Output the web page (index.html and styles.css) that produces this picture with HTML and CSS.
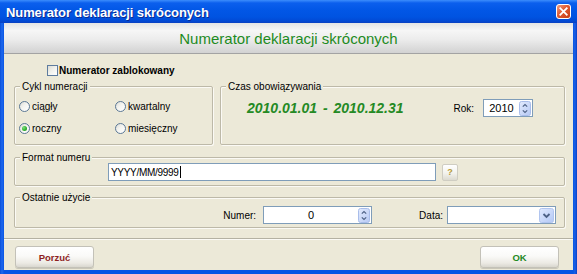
FILE: index.html
```html
<!DOCTYPE html>
<html lang="pl">
<head>
<meta charset="utf-8">
<title>Numerator deklaracji skróconych</title>
<link rel="stylesheet" href="styles.css">
</head>
<body>
<div class="window">
  <div class="titlebar">
    <span class="title">Numerator deklaracji skróconych</span>
    <span class="close">
      <svg width="15" height="15" viewBox="0 0 15 15">
        <defs>
          <linearGradient id="cg" x1="0" y1="0" x2="1" y2="1">
            <stop offset="0" stop-color="#f0a58a"/>
            <stop offset="0.45" stop-color="#e05a32"/>
            <stop offset="1" stop-color="#c23a12"/>
          </linearGradient>
        </defs>
        <rect x="0.5" y="0.5" width="14" height="14" rx="2.5" fill="url(#cg)" stroke="#ffffff"/>
        <path d="M4.3 4.3 L10.7 10.7 M10.7 4.3 L4.3 10.7" stroke="#ffffff" stroke-width="1.8" stroke-linecap="square"/>
      </svg>
    </span>
  </div>
  <div class="client">
    <div class="header">Numerator deklaracji skróconych</div>
    <div class="content">
      <div class="lock"><span class="checkbox"></span><span>Numerator zablokowany</span></div>
      <div class="row-groups">
        <div class="group cycle">
          <span class="legend">Cykl numeracji</span>
          <div class="radios">
            <span class="radio-item"><span class="radio"></span>ciągły</span>
            <span class="radio-item"><span class="radio"></span>kwartalny</span>
            <span class="radio-item"><span class="radio checked"></span>roczny</span>
            <span class="radio-item"><span class="radio"></span>miesięczny</span>
          </div>
        </div>
        <div class="group period">
          <span class="legend">Czas obowiązywania</span>
          <div class="period-row">
            <span class="dates">2010.01.01 - 2010.12.31</span>
            <span class="lbl rok">Rok:</span>
            <span class="field spin-year">
              <span class="val">2010</span>
              <svg class="spinbtn" width="12" height="15" viewBox="0 0 12 15">
                <defs>
                  <linearGradient id="sg1" x1="0" y1="0" x2="1" y2="1">
                    <stop offset="0" stop-color="#e3ebfd"/>
                    <stop offset="1" stop-color="#b6c9f4"/>
                  </linearGradient>
                </defs>
                <rect x="0.5" y="0.5" width="11" height="14" rx="2" fill="url(#sg1)" stroke="#a9bdea"/>
                <path d="M3.8 5.6 L6 3.6 L8.2 5.6 M3.8 9.4 L6 11.4 L8.2 9.4" fill="none" stroke="#4d6185" stroke-width="1.2"/>
              </svg>
            </span>
          </div>
        </div>
      </div>
      <div class="group format">
        <span class="legend">Format numeru</span>
        <div class="format-row">
          <span class="field text-input"><span class="txt">YYYY/MM/9999</span><span class="caret"></span></span>
          <span class="help">?</span>
        </div>
      </div>
      <div class="group last">
        <span class="legend">Ostatnie użycie</span>
        <div class="last-row">
          <span class="lbl">Numer:</span>
          <span class="field spin-num">
            <span class="val">0</span>
            <svg class="spinbtn" width="12" height="15" viewBox="0 0 12 15">
              <defs>
                <linearGradient id="sg2" x1="0" y1="0" x2="1" y2="1">
                  <stop offset="0" stop-color="#e3ebfd"/>
                  <stop offset="1" stop-color="#b6c9f4"/>
                </linearGradient>
              </defs>
              <rect x="0.5" y="0.5" width="11" height="14" rx="2" fill="url(#sg2)" stroke="#a9bdea"/>
              <path d="M3.8 5.6 L6 3.6 L8.2 5.6 M3.8 9.4 L6 11.4 L8.2 9.4" fill="none" stroke="#4d6185" stroke-width="1.2"/>
            </svg>
          </span>
          <span class="lbl data-lbl">Data:</span>
          <span class="field combo">
            <span class="val"></span>
            <svg class="combobtn" width="15" height="15" viewBox="0 0 15 15">
              <defs>
                <linearGradient id="cbg" x1="0" y1="0" x2="1" y2="1">
                  <stop offset="0" stop-color="#e1eafe"/>
                  <stop offset="1" stop-color="#b3c8f5"/>
                </linearGradient>
              </defs>
              <rect x="0.5" y="0.5" width="14" height="14" rx="2" fill="url(#cbg)" stroke="#b1c5ef"/>
              <path d="M4.5 6 L7.5 9 L10.5 6" fill="none" stroke="#4d6185" stroke-width="1.8"/>
            </svg>
          </span>
        </div>
      </div>
    </div>
    <div class="separator"></div>
    <div class="footer">
      <button class="btn cancel">Porzuć</button>
      <button class="btn ok">OK</button>
    </div>
  </div>
</div>
</body>
</html>
```

FILE: styles.css
```css
html, body {
  margin: 0;
  padding: 0;
}

body {
  width: 577px;
  height: 274px;
  overflow: hidden;
  font-family: "Liberation Sans", Arial, sans-serif;
  font-size: 10px;
  color: #000;
}

.window {
  width: 577px;
  height: 274px;
  display: flex;
  flex-direction: column;
  background: linear-gradient(90deg, #0a4fd8 0, #1d68ee 2px, #0855e4 4px, #0855e4 573px, #1a5fe6 575px, #0a3fc4 577px);
}

.titlebar {
  height: 23px;
  flex: none;
  display: flex;
  align-items: center;
  padding: 0 6px 0 6px;
  background: linear-gradient(180deg, #3c8dfc 0, #0b5fed 3px, #0257e6 10px, #0053e1 17px, #0249d4 21px, #0a40c0 23px);
}

.title {
  color: #fff;
  font-weight: bold;
  font-size: 13px;
  letter-spacing: -0.1px;
  text-shadow: 1px 1px 0 #0c2a92;
  padding-top: 1px;
}

.close {
  margin-left: auto;
  display: flex;
  width: 15px;
  height: 15px;
}

.client {
  flex: 1;
  margin: 0 4px 4px 4px;
  background: #ece9d8;
  display: flex;
  flex-direction: column;
}

.header {
  height: 30px;
  flex: none;
  border-bottom: 1px solid #a3a3a3;
  background: linear-gradient(180deg, #e4e4e4 0, #f6f6f6 25%, #ececec 55%, #d2d2d2 100%);
  color: #1e8b1e;
  font-size: 15px;
  display: flex;
  align-items: center;
  justify-content: center;
}

.content {
  display: flex;
  flex-direction: column;
  padding: 9px 8px 0 10px;
}

.lock {
  display: flex;
  align-items: center;
  height: 14px;
  padding-left: 33px;
  font-weight: bold;
  gap: 1px;
}

.checkbox {
  width: 11px;
  height: 11px;
  box-sizing: border-box;
  border: 1px solid #5e7c9f;
  background: linear-gradient(135deg, #dcdcd4 0, #f2f2ee 50%, #ffffff 100%);
}

.row-groups {
  display: flex;
  gap: 7px;
  margin-top: 9px;
  height: 59px;
}

.group {
  position: relative;
  box-sizing: border-box;
  border: 1px solid #bdb9a8;
  border-radius: 2px;
  box-shadow: inset 1px 1px 0 #fbfaf5, 1px 1px 0 #fbfaf5;
}

.legend {
  position: absolute;
  top: -6px;
  left: 5px;
  padding: 0 2px;
  line-height: 12px;
  background: #ece9d8;
  white-space: nowrap;
}

.cycle {
  width: 199px;
  flex: none;
}

.radios {
  display: grid;
  grid-template-columns: 96px auto;
  grid-auto-rows: 16px;
  row-gap: 6px;
  padding: 11px 0 0 4px;
}

.radio-item {
  display: flex;
  align-items: center;
  gap: 2px;
}

.radio {
  width: 11px;
  height: 11px;
  box-sizing: border-box;
  border-radius: 50%;
  border: 1px solid #5b7896;
  background: linear-gradient(135deg, #dcdcd6 0, #f4f4f0 45%, #ffffff 100%);
  display: flex;
  align-items: center;
  justify-content: center;
}

.radio.checked::after {
  content: "";
  width: 5px;
  height: 5px;
  border-radius: 50%;
  background: radial-gradient(circle at 35% 35%, #7ee07e 0, #30b030 55%, #1a8a1a 100%);
}

.period {
  flex: 1;
}

.period-row {
  display: flex;
  align-items: center;
  height: 18px;
  padding: 12px 31px 0 26px;
}

.dates {
  color: #248a24;
  font-weight: bold;
  font-style: italic;
  font-size: 14px;
  word-spacing: 2px;
  white-space: pre;
}

.lbl {
  white-space: nowrap;
}

.rok {
  margin-left: auto;
  margin-right: 9px;
}

.field {
  display: flex;
  align-items: center;
  box-sizing: border-box;
  height: 18px;
  border: 1px solid #7f9db9;
  background: #fff;
}

.field .val {
  flex: 1;
  text-align: center;
  font-size: 11px;
}

.spinbtn {
  flex: none;
  margin-right: 1px;
}

.spin-year {
  width: 50px;
}

.format {
  margin-top: 12px;
  height: 29px;
}

.format-row {
  display: flex;
  align-items: center;
  padding: 5px 0 0 93px;
}

.text-input {
  width: 328px;
  padding-left: 2px;
}

.txt {
  letter-spacing: -0.3px;
}

.caret {
  width: 1px;
  height: 12px;
  background: #000;
  margin-left: 1px;
}

.help {
  width: 16px;
  height: 17px;
  margin-left: 6px;
  box-sizing: border-box;
  border: 1px solid #cfcdc2;
  border-radius: 2px;
  background: linear-gradient(180deg, #ffffff 0, #f3f2ec 55%, #dcdad0 100%);
  color: #b59a3a;
  font-weight: bold;
  font-size: 9px;
  display: flex;
  align-items: center;
  justify-content: center;
}

.last {
  margin-top: 11px;
  height: 31px;
}

.last-row {
  display: flex;
  align-items: center;
  justify-content: flex-end;
  padding: 8px 8px 0 0;
}

.spin-num {
  width: 109px;
  margin-left: 7px;
}

.data-lbl {
  margin-left: 47px;
}

.combo {
  width: 109px;
  margin-left: 4px;
  padding-right: 1px;
}

.combobtn {
  flex: none;
}

.separator {
  margin-top: 10px;
  border-top: 1px solid #b4b1a2;
  border-bottom: 1px solid #fbfaf5;
}

.footer {
  display: flex;
  justify-content: space-between;
  padding: 6px 14px 0 11px;
}

.btn {
  width: 79px;
  height: 22px;
  box-sizing: border-box;
  border: 1px solid #c3c1b8;
  border-radius: 3px;
  background: linear-gradient(180deg, #ffffff 0, #fafaf8 45%, #eceae4 80%, #d9d7cf 100%);
  box-shadow: 0 1px 0 #c9c6b8;
  font-family: "Liberation Sans", Arial, sans-serif;
  font-weight: bold;
  font-size: 9.5px;
  padding: 0;
}

.cancel {
  color: #8e1f1f;
}

.ok {
  color: #1f8a1f;
}
```
